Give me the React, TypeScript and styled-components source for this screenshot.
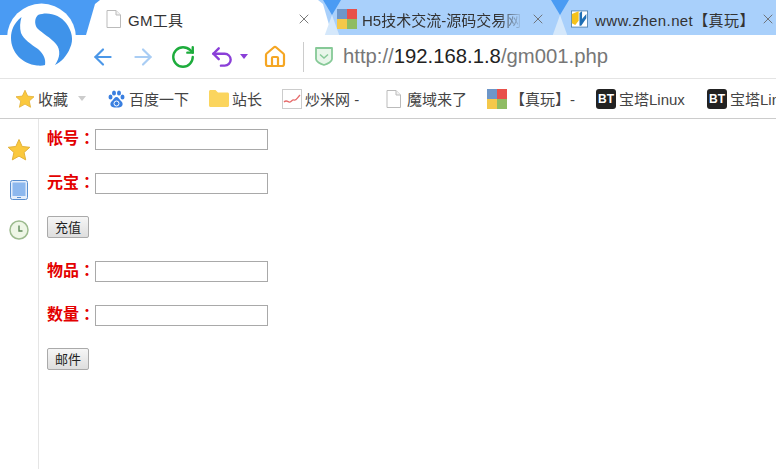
import React from 'react';
import styled, { createGlobalStyle } from 'styled-components';
import { ArrowLeft, ArrowRight, RotateCw, Undo2, House, X } from 'lucide-react';

const GlobalStyle = createGlobalStyle`
  html, body {
    margin: 0;
    padding: 0;
    background: #fff;
    overflow: hidden;
  }
  body {
    font-family: "Liberation Sans", "Noto Sans CJK SC", sans-serif;
  }
`;

const Browser = styled.div`
  position: relative;
  width: 776px;
  height: 469px;
  overflow: hidden;
  display: flex;
  flex-direction: column;
`;

const LogoBadge = styled.div`
  position: absolute;
  left: 0;
  top: 0;
  width: 84px;
  height: 75px;
  z-index: 5;
`;

const TabStrip = styled.div`
  height: 35px;
  display: flex;
  flex: none;
  background: linear-gradient(to right, #4a9bf3 100px, #a9d0fb 100px);
`;

const StripHead = styled.div`
  width: 86px;
  flex: none;
`;

const Tab = styled.div<{ $active?: boolean; $width: number; $inset: number }>`
  width: ${p => p.$width}px;
  flex: none;
  height: 35px;
  display: flex;
  align-items: center;
  box-sizing: border-box;
  padding: 3px 0 0 ${p => p.$inset}px;
  background: ${p => (p.$active ? '#fff' : 'transparent')};
  clip-path: ${p =>
    p.$active
      ? 'polygon(0 100%, 9px 4px, 14px 0, calc(100% - 14px) 0, calc(100% - 9px) 4px, 100% 100%)'
      : 'none'};
`;

const TabNotch = styled.div`
  position: relative;
  width: 18px;
  flex: none;
  margin: 0 -9px;
  z-index: 2;

  &::before {
    content: '';
    position: absolute;
    inset: 0;
    background: #4a9bf3;
    clip-path: polygon(0 0, 100% 0, 50% 15px);
  }

  &::after {
    content: '';
    position: absolute;
    inset: 0;
    background: #d5e8fb;
    clip-path: polygon(50% 15px, 90% 100%, 10% 100%);
  }
`;

const TabTitle = styled.span<{ $width: number; $gap: number; $fade?: boolean; $spacing?: number }>`
  width: ${p => p.$width}px;
  flex: none;
  margin-left: ${p => p.$gap}px;
  font-size: 15px;
  letter-spacing: ${p => p.$spacing ?? 0}px;
  color: #333;
  white-space: nowrap;
  overflow: hidden;
  mask-image: ${p => (p.$fade ? 'linear-gradient(to right, #000 85%, transparent)' : 'none')};
`;

const TabClose = styled.span<{ $gap: number }>`
  display: flex;
  color: #666;
  margin-left: ${p => p.$gap}px;
`;

const Toolbar = styled.div`
  height: 43px;
  flex: none;
  display: flex;
  align-items: center;
  padding-left: 90px;
  background: #fff;
`;

const NavButton = styled.span<{ $gap: number }>`
  display: flex;
  margin-right: ${p => p.$gap}px;
`;

const DropCaret = styled.span<{ $color: string; $gap: number; $before?: number }>`
  width: 0;
  height: 0;
  border-left: 4px solid transparent;
  border-right: 4px solid transparent;
  border-top: 5px solid ${p => p.$color};
  margin-left: ${p => p.$before ?? 0}px;
  margin-right: ${p => p.$gap}px;
`;

const Divider = styled.span`
  width: 1px;
  height: 30px;
  background: #ccc;
  margin-right: 11px;
`;

const Address = styled.div`
  margin-left: 10px;
  font-size: 20.300px;
  color: #777;
`;

const Host = styled.span`
  color: #222;
`;

const BookmarkBar = styled.div`
  height: 41px;
  flex: none;
  box-sizing: border-box;
  display: flex;
  align-items: center;
  padding-left: 15px;
  border-top: 1px solid #e4e4e4;
  border-bottom: 1px solid #ccc;
  overflow: hidden;
  white-space: nowrap;
`;

const Bookmark = styled.div<{ $width: number; $gap?: number }>`
  width: ${p => p.$width}px;
  flex: none;
  display: flex;
  align-items: center;
  gap: ${p => p.$gap ?? 3}px;
  font-size: 15px;
  color: #444;
`;

const Body = styled.div`
  flex: 1;
  display: flex;
  min-height: 0;
`;

const SideBar = styled.div`
  width: 39px;
  flex: none;
  box-sizing: border-box;
  border-right: 1px solid #e5e5e5;
  padding: 11px 1px 0 0;
`;

const SideSlot = styled.div`
  height: 40px;
  display: flex;
  align-items: center;
  justify-content: center;
`;

const Content = styled.div`
  flex: 1;
  padding: 10px 0 0 8px;
`;

const FieldRow = styled.div`
  height: 21px;
  display: flex;
  align-items: center;
  margin-bottom: 23px;
`;

const FieldLabel = styled.label`
  width: 48px;
  flex: none;
  font-size: 16px;
  font-weight: 700;
  color: #e30000;
  font-family: "Noto Sans CJK TC", sans-serif;
  line-height: 20px;
  margin-top: -5px;
`;

const FieldInput = styled.input`
  width: 173px;
  height: 21px;
  box-sizing: border-box;
  border: 1px solid #a9a9a9;
  padding: 0 2px;
  background: #fff;
  margin: 0;
`;

const SubmitButton = styled.button`
  display: block;
  width: 42px;
  height: 22px;
  box-sizing: border-box;
  padding: 0;
  margin: -1px 0 23px;
  border: 1px solid #aaa;
  border-radius: 2px;
  background: linear-gradient(#f6f6f6, #dedede);
  font-family: "Noto Sans CJK SC", sans-serif;
  font-size: 13px;
  line-height: 20px;
  color: #222;
`;

const SogouLogo = () => (
  <svg width="84" height="75" viewBox="0 0 84 75">
    <circle cx="41.500" cy="38" r="34.500" fill="#fff" />
    <g fill="#3f93ea">
      <path d="M21.500 17C14 23 11 30 11 38c0 14 11 26 26 27.500 3 .3 6 .2 8-.5 1-5-1-11-7-16-7-5-14-9-17-16-1.500-5-1-11 .5-16z" />
      <path d="M38 15c10-4 22 0 28 8 6 8 8 17 4 25-3 8-9 14-15 17 5-7 6-15 1-21-5-6-14-11-19-16-3-5-2-10 1-13z" />
    </g>
  </svg>
);

const PageIcon = ({ size = 18 }: { size?: number }) => (
  <svg width={size - 3} height={size} viewBox="0 0 15 18">
    <path d="M1 .5h9l4.500 4.500v12.500h-13.500z" fill="#fff" stroke="#bbb" />
    <path d="M10 .5v4.500h4.500" fill="#f2f2f2" stroke="#bbb" />
  </svg>
);

const MosaicIcon = () => (
  <svg width="20" height="20" viewBox="0 0 20 20">
    <rect width="10" height="10" fill="#6d96c8" />
    <rect x="10" width="10" height="10" fill="#e8504a" />
    <rect y="10" width="10" height="10" fill="#f4c84a" />
    <rect x="10" y="10" width="10" height="10" fill="#8fbc63" />
  </svg>
);

const ZhenIcon = () => (
  <svg width="20" height="20" viewBox="0 0 20 20">
    <rect x=".5" y=".5" width="19" height="19" fill="#fff" stroke="#4b7fae" />
    <path d="M1 4l8-3v11l-4 5-4-2z" fill="#f5c21b" />
    <path d="M10 18V3l3-2v9l5-6v5l-6 9z" fill="#1f6fb5" />
  </svg>
);

const BtIcon = () => (
  <svg width="20" height="20" viewBox="0 0 20 20">
    <rect width="20" height="20" rx="3" fill="#222" />
    <text x="10" y="14" textAnchor="middle" fontSize="12" fontWeight="700" fill="#fff" fontFamily="Liberation Sans">
      BT
    </text>
  </svg>
);

const StarIcon = ({ size }: { size: number }) => (
  <svg width={size} height={size} viewBox="0 0 24 24">
    <path
      d="M12 1.500l3.200 7 7.600.8-5.700 5.100 1.600 7.500L12 18.100l-6.700 3.800 1.600-7.500L1.200 9.300l7.600-.8z"
      fill="#fbc93d"
      stroke="#e3b23a"
    />
  </svg>
);

const BaiduIcon = () => (
  <svg width="17" height="18" viewBox="0 0 17 18">
    <g fill="#3a7fe0">
      <ellipse cx="2.500" cy="7" rx="2" ry="2.500" />
      <ellipse cx="6" cy="3" rx="2" ry="2.600" />
      <ellipse cx="11" cy="3" rx="2" ry="2.600" />
      <ellipse cx="14.500" cy="7" rx="2" ry="2.500" />
      <path d="M8.500 7c-2 0-2.500 2-4 3.500C3 12 2 13 2.500 15c.5 2 2.500 2.500 6 2.500s5.500-.5 6-2.500c.5-2-.5-3-2-4.500C11 9 10.500 7 8.500 7z" />
    </g>
    <circle cx="8.500" cy="13.500" r="2.500" fill="none" stroke="#fff" />
  </svg>
);

const FolderIcon = () => (
  <svg width="20" height="17" viewBox="0 0 20 17">
    <path d="M0 1.500C0 .7.700 0 1.500 0h5L9 2.500h9.500c.8 0 1.500.7 1.500 1.500v11.500c0 .8-.7 1.500-1.500 1.500h-17C.7 17 0 16.300 0 15.500z" fill="#fbd55e" />
  </svg>
);

const ChartIcon = () => (
  <svg width="20" height="20" viewBox="0 0 20 20">
    <rect x=".5" y=".5" width="19" height="19" fill="#fff" stroke="#ccc" />
    <path d="M2 13c2-2 3-1 5 0s3-3 5-2 3-2 6-5" fill="none" stroke="#e66a6a" strokeWidth="1.300" />
  </svg>
);

const ShieldIcon = () => (
  <svg width="18" height="19" viewBox="0 0 18 19">
    <path d="M1 1h16v11c0 2.500-4 5-8 6-4-1-8-3.500-8-6z" fill="#e8f6ea" stroke="#86c997" strokeWidth="1.800" strokeLinejoin="round" />
    <path d="M5 7.500l4 3.500 4-3.500" fill="none" stroke="#86c997" strokeWidth="1.500" />
  </svg>
);

const TabletIcon = () => (
  <svg width="18" height="20" viewBox="0 0 18 20">
    <rect x=".5" y=".5" width="17" height="19" rx="2" fill="#e4eefb" stroke="#5a8fcf" />
    <rect x="2.500" y="2.500" width="13" height="13.500" fill="#8db8ee" />
    <rect x="7" y="17" width="4" height="1" fill="#5a8fcf" />
  </svg>
);

const ClockIcon = () => (
  <svg width="20" height="20" viewBox="0 0 20 20">
    <circle cx="10" cy="10" r="9" fill="#eef6e6" stroke="#9dbb8f" strokeWidth="1.500" />
    <path d="M10 5.500V11h3.500" fill="none" stroke="#5f8a5a" strokeWidth="1.400" />
  </svg>
);

const fields = {
  first: ['帐号：', '元宝：'],
  second: ['物品：', '数量：']
};

const App: React.FC = () => (
  <Browser>
    <GlobalStyle />
    <LogoBadge>
      <SogouLogo />
    </LogoBadge>

    <TabStrip>
      <StripHead />
      <Tab $active $width={246} $inset={20}>
        <PageIcon />
        <TabTitle $width={168} $gap={7} $spacing={0.300}>GM工具</TabTitle>
        <TabClose $gap={0}>
          <X size={16} strokeWidth={1.300} />
        </TabClose>
      </Tab>
      <TabNotch />
      <Tab $width={228} $inset={5}>
        <MosaicIcon />
        <TabTitle $width={161} $gap={5} $fade>H5技术交流-源码交易网</TabTitle>
        <TabClose $gap={7}>
          <X size={16} strokeWidth={1.300} />
        </TabClose>
      </Tab>
      <TabNotch />
      <Tab $width={216} $inset={11}>
        <ZhenIcon />
        <TabTitle $width={164} $gap={7} $spacing={0.400}>www.zhen.net【真玩】</TabTitle>
        <TabClose $gap={1}>
          <X size={16} strokeWidth={1.300} />
        </TabClose>
      </Tab>
    </TabStrip>

    <Toolbar>
      <NavButton $gap={14}>
        <ArrowLeft size={26} color="#4b97e8" strokeWidth={2} />
      </NavButton>
      <NavButton $gap={14}>
        <ArrowRight size={26} color="#a9cdf4" strokeWidth={2} />
      </NavButton>
      <NavButton $gap={13}>
        <RotateCw size={26} color="#1dac3c" strokeWidth={2.200} />
      </NavButton>
      <NavButton $gap={5}>
        <Undo2 size={26} color="#8a3fd8" strokeWidth={2.200} />
      </NavButton>
      <DropCaret $color="#8a3fd8" $gap={15} />
      <NavButton $gap={16}>
        <House size={24} color="#f5a623" strokeWidth={2.200} />
      </NavButton>
      <Divider />
      <ShieldIcon />
      <Address>
        http://<Host>192.168.1.8</Host>/gm001.php
      </Address>
    </Toolbar>

    <BookmarkBar>
      <Bookmark $width={93}>
        <StarIcon size={20} />
        收藏
        <DropCaret $color="#ccc" $gap={0} $before={7} />
      </Bookmark>
      <Bookmark $width={101} $gap={4}>
        <BaiduIcon />
        百度一下
      </Bookmark>
      <Bookmark $width={73}>
        <FolderIcon />
        站长
      </Bookmark>
      <Bookmark $width={104}>
        <ChartIcon />
        炒米网 -
      </Bookmark>
      <Bookmark $width={101} $gap={6}>
        <PageIcon />
        魔域来了
      </Bookmark>
      <Bookmark $width={109}>
        <MosaicIcon />
        【真玩】-
      </Bookmark>
      <Bookmark $width={111}>
        <BtIcon />
        宝塔Linux
      </Bookmark>
      <Bookmark $width={111}>
        <BtIcon />
        宝塔Linux
      </Bookmark>
    </BookmarkBar>

    <Body>
      <SideBar>
        <SideSlot>
          <StarIcon size={24} />
        </SideSlot>
        <SideSlot>
          <TabletIcon />
        </SideSlot>
        <SideSlot>
          <ClockIcon />
        </SideSlot>
      </SideBar>
      <Content>
        {fields.first.map(label => (
          <FieldRow key={label}>
            <FieldLabel>{label}</FieldLabel>
            <FieldInput />
          </FieldRow>
        ))}
        <SubmitButton>充值</SubmitButton>
        {fields.second.map(label => (
          <FieldRow key={label}>
            <FieldLabel>{label}</FieldLabel>
            <FieldInput />
          </FieldRow>
        ))}
        <SubmitButton>邮件</SubmitButton>
      </Content>
    </Body>
  </Browser>
);

export default App;
